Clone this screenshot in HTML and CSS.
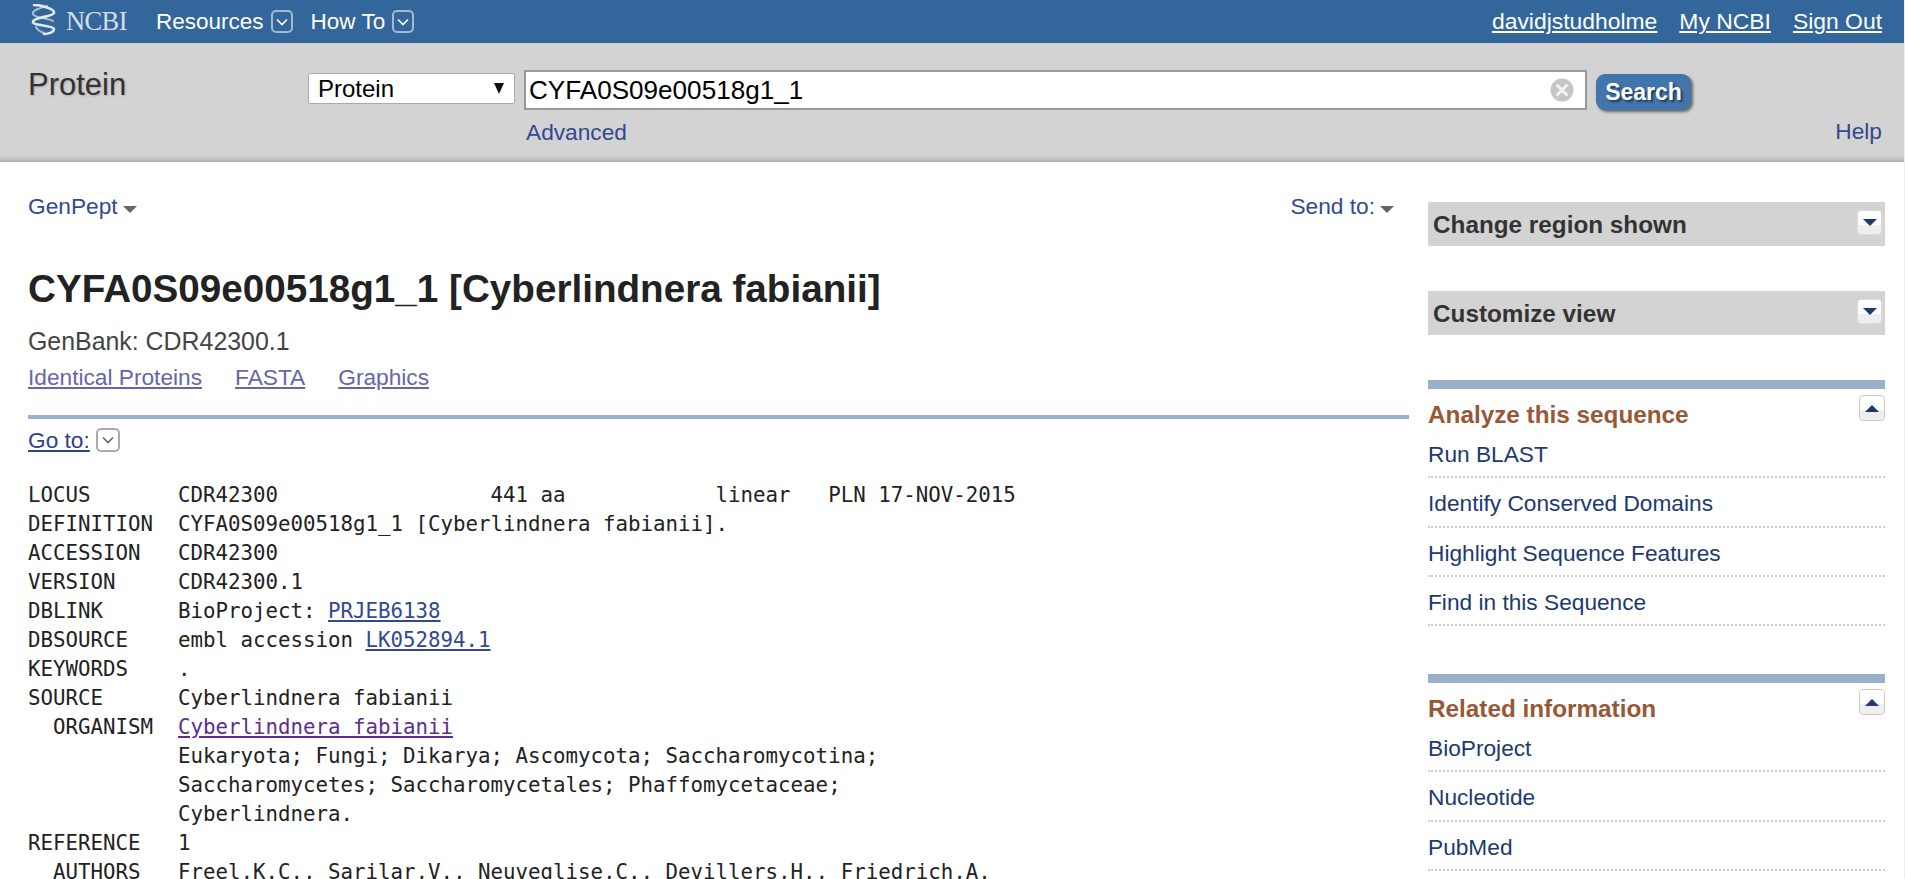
FILE: index.html
```html
<!DOCTYPE html>
<html lang="en">
<head>
<meta charset="utf-8">
<title>CYFA0S09e00518g1_1 [Cyberlindnera fabianii] - Protein - NCBI</title>
<link rel="stylesheet" href="styles.css">
</head>
<body>
<header class="nav">
  <a class="logo" href="#">
    <svg class="helix" viewBox="0 0 28 32" width="28" height="32" aria-hidden="true">
      <path class="strand-back" d="M18 2 C11 4 3 6 4 10 C5 14 19 14 24 17 M7 23 C9 27 12 28 15 29" />
      <path d="M5 1 C12 1 26 5 25 9 C24 13 4 13 4 18 C4 22 24 21 25 25 C25 28 20 30 15 30" />
    </svg>
    <span class="logo-text">NCBI</span>
  </a>
  <a class="nav-link" href="#">Resources</a>
  <span class="chev chev-nav"><svg viewBox="0 0 12 8" width="12" height="8"><path d="M1 1.5 L6 6.5 L11 1.5"/></svg></span>
  <a class="nav-link nav-howto" href="#">How To</a>
  <span class="chev chev-nav"><svg viewBox="0 0 12 8" width="12" height="8"><path d="M1 1.5 L6 6.5 L11 1.5"/></svg></span>
  <nav class="nav-user">
    <a href="#">davidjstudholme</a>
    <a href="#">My NCBI</a>
    <a href="#">Sign Out</a>
  </nav>
</header>

<section class="search">
  <div class="search-db">Protein</div>
  <div class="search-select">
    <select aria-label="Database"><option>Protein</option></select>
    <span class="select-arrow"></span>
  </div>
  <div class="search-mid">
    <div class="search-input">
      <input type="text" value="CYFA0S09e00518g1_1" aria-label="Search term">
      <span class="clear"><svg viewBox="0 0 24 24" width="24" height="24"><circle cx="12" cy="12" r="11.5"/><path d="M7.5 7.5 L16.5 16.5 M16.5 7.5 L7.5 16.5"/></svg></span>
    </div>
    <a class="advanced" href="#">Advanced</a>
  </div>
  <div class="search-side">
    <button class="search-btn" type="button">Search</button>
    <a class="help" href="#">Help</a>
  </div>
</section>

<div class="page">
  <main class="content">
    <div class="toolbar">
      <a class="tool" href="#">GenPept<span class="caret"></span></a>
      <a class="tool" href="#">Send to:<span class="caret"></span></a>
    </div>
    <h1>CYFA0S09e00518g1_1 [Cyberlindnera fabianii]</h1>
    <p class="accession">GenBank: CDR42300.1</p>
    <div class="links">
      <a href="#">Identical Proteins</a>
      <a href="#">FASTA</a>
      <a href="#">Graphics</a>
    </div>
    <div class="goto">
      <a href="#">Go to:</a>
      <span class="chev chev-goto"><svg viewBox="0 0 12 8" width="12" height="8"><path d="M1 1.5 L6 6.5 L11 1.5"/></svg></span>
    </div>
<pre class="record">LOCUS       CDR42300                 441 aa            linear   PLN 17-NOV-2015
DEFINITION  CYFA0S09e00518g1_1 [Cyberlindnera fabianii].
ACCESSION   CDR42300
VERSION     CDR42300.1
DBLINK      BioProject: <a href="#">PRJEB6138</a>
DBSOURCE    embl accession <a href="#">LK052894.1</a>
KEYWORDS    .
SOURCE      Cyberlindnera fabianii
  ORGANISM  <a class="visited" href="#">Cyberlindnera fabianii</a>
            Eukaryota; Fungi; Dikarya; Ascomycota; Saccharomycotina;
            Saccharomycetes; Saccharomycetales; Phaffomycetaceae;
            Cyberlindnera.
REFERENCE   1
  AUTHORS   Freel,K.C., Sarilar,V., Neuveglise,C., Devillers,H., Friedrich,A.</pre>
  </main>

  <aside class="side">
    <div class="side-box">
      <h2>Change region shown</h2>
      <span class="toggle"><span class="tri-down"></span></span>
    </div>
    <div class="side-box">
      <h2>Customize view</h2>
      <span class="toggle"><span class="tri-down"></span></span>
    </div>
    <section class="side-panel">
      <div class="panel-head">
        <h3>Analyze this sequence</h3>
        <span class="toggle toggle-up"><span class="tri-up"></span></span>
      </div>
      <ul>
        <li><a href="#">Run BLAST</a></li>
        <li><a href="#">Identify Conserved Domains</a></li>
        <li><a href="#">Highlight Sequence Features</a></li>
        <li><a href="#">Find in this Sequence</a></li>
      </ul>
    </section>
    <section class="side-panel">
      <div class="panel-head">
        <h3>Related information</h3>
        <span class="toggle toggle-up"><span class="tri-up"></span></span>
      </div>
      <ul>
        <li><a href="#">BioProject</a></li>
        <li><a href="#">Nucleotide</a></li>
        <li><a href="#">PubMed</a></li>
      </ul>
    </section>
  </aside>
</div>
</body>
</html>
```
FILE: styles.css
```css
* { box-sizing: border-box; }
html, body { height: 100%; overflow: hidden; }
body {
  margin: 0;
  background: #fff;
  color: #333;
  border-right: 1px solid #eee;
  font-family: "Liberation Sans", Arial, sans-serif;
  font-size: 22.7px;
}
a { text-decoration: none; }

/* top bar */
.nav {
  display: flex;
  align-items: center;
  height: 43px;
  background: #33669a;
  color: #fff;
  padding: 0 22px 0 29px;
}
.logo { display: flex; align-items: center; gap: 9px; width: 127px; }
.helix { flex: none; margin-top: -4px; fill: none; stroke: #e2e9f1; stroke-width: 2.6; stroke-linecap: round; }
.strand-back { stroke: #a9bdd2; stroke-width: 2; }
.logo-text {
  font-family: "Liberation Serif", serif;
  font-size: 26.5px;
  color: #d2dde8;
  letter-spacing: -0.6px;
}
.nav-link { color: #fff; font-size: 22.5px; }
.nav-howto { margin-left: 18px; }
.chev {
  display: inline-flex;
  align-items: center;
  justify-content: center;
  flex: none;
  width: 22px;
  height: 23px;
  border: 2px solid #a3b9cf;
  border-radius: 5px;
  margin-left: 7px;
}
.chev svg { fill: none; stroke: #fff; stroke-width: 1.6; }
.chev-goto { width: 24px; height: 24px; border-color: #aaa; margin-left: 6px; }
.chev-goto svg { stroke: #666; }
.nav-user { margin-left: auto; display: flex; gap: 22px; font-size: 22.9px; }
.nav-user a { color: #fff; text-decoration: underline; }

/* search band */
.search {
  display: flex;
  height: 119px;
  background: linear-gradient(#d3d3d3 calc(100% - 7px), #c4c4c4 calc(100% - 3px), #adadad 100%);
  padding: 26px 22px 0 28px;
}
.search-db {
  width: 280px;
  padding-top: 1px;
  font-size: 31px;
  line-height: 30px;
  color: #333;
  text-shadow: 1px 1px 2px #aaa;
}
.search-select { position: relative; width: 207px; height: 31px; margin-top: 4px; }
.search-select select {
  appearance: none;
  width: 100%;
  height: 100%;
  padding: 0 0 0 9px;
  border: 1px solid #aaa;
  border-radius: 2px;
  background: #fff;
  color: #000;
  font-family: inherit;
  font-size: 24px;
}
.select-arrow {
  position: absolute;
  top: 10px;
  right: 11px;
  border-left: 5.5px solid transparent;
  border-right: 5.5px solid transparent;
  border-top: 11px solid #111;
}
.search-mid { margin-left: 9px; width: 1063px; display: flex; flex-direction: column; padding-top: 1px; }
.search-input { position: relative; height: 40px; flex: none; }
.search-input input {
  width: 100%;
  height: 100%;
  padding: 0 44px 0 3px;
  border: 2px solid #999;
  border-radius: 0;
  background: #fff;
  color: #000;
  font-family: inherit;
  font-size: 26.1px;
  outline: none;
}
.clear { position: absolute; top: 8px; right: 13px; width: 24px; height: 24px; }
.clear circle { fill: #c6c6c6; }
.clear path { fill: none; stroke: #f2f2f2; stroke-width: 3; stroke-linecap: round; }
.advanced { margin-top: 7px; margin-left: 2px; line-height: 30px; color: #32498f; font-size: 22.7px; }
.search-side { flex: 1; display: flex; flex-direction: column; align-items: flex-start; padding-top: 1px; }
.search-btn {
  margin: 4px 0 0 9px;
  width: 95px;
  height: 36px;
  padding: 0;
  border: 0;
  border-radius: 9px;
  background: #4275ab;
  color: #fff;
  font-family: inherit;
  font-size: 23px;
  font-weight: bold;
  text-shadow: 2px 2px 2px #1d3c5e;
  box-shadow: 2px 2px 3px #666;
}
.help { align-self: flex-end; margin-top: 6px; line-height: 30px; color: #32498f; }

/* page */
.page {
  display: flex;
  height: 717px;
  padding-left: 28px;
}
.content { width: 1381px; flex: none; }
.toolbar {
  display: flex;
  justify-content: space-between;
  margin-top: 28px;
  padding-right: 15px;
  line-height: 32px;
}
.tool { color: #32498f; }
.caret {
  display: inline-block;
  margin-left: 5px;
  vertical-align: 1px;
  border-left: 7px solid transparent;
  border-right: 7px solid transparent;
  border-top: 7px solid #666;
}
h1 {
  margin: 45px 0 0;
  font-size: 38.65px;
  line-height: 44px;
  font-weight: bold;
  color: #222;
}
.accession { margin: 15px 0 0; font-size: 24.9px; line-height: 30px; color: #444; }
.links { display: flex; gap: 33px; margin-top: 6px; line-height: 30px; padding-bottom: 23px; border-bottom: 4px solid #97b0cd; }
.links a { color: #6666aa; text-decoration: underline; }
.goto { display: flex; align-items: center; height: 30px; margin-top: 6px; }
.goto a { color: #2c4488; text-decoration: underline; }
.record {
  margin: 26px 0 0;
  font-family: "DejaVu Sans Mono", "Liberation Mono", monospace;
  font-size: 20.78px;
  line-height: 29px;
  color: #222;
}
.record a { color: #32498f; text-decoration: underline; }
.record a.visited { color: #5f2d91; }

/* sidebar */
.side { width: 457px; margin-left: 19px; flex: none; padding-top: 40px; }
.side-box {
  display: flex;
  align-items: center;
  justify-content: space-between;
  height: 44px;
  margin-bottom: 45px;
  padding: 2px 3px 0 5px;
  background: #d3d3d3;
}
h2 { margin: 0; font-size: 24.3px; font-weight: bold; color: #333; }
.toggle {
  display: inline-flex;
  align-items: center;
  justify-content: center;
  flex: none;
  width: 25px;
  height: 25px;
  margin-top: -6px;
  border: 1px solid #ddd;
  border-radius: 4px;
  background: linear-gradient(#fff 60%, #eee 60%);
}
.tri-down { border-left: 7px solid transparent; border-right: 7px solid transparent; border-top: 7px solid #1c3a6e; }
.tri-up { border-left: 7px solid transparent; border-right: 7px solid transparent; border-bottom: 7px solid #1c3a6e; }
.side-panel { border-top: 9px solid #9ab0c8; margin-bottom: 48px; }
.side-box + .side-panel { margin-top: 1px; }
.panel-head { display: flex; justify-content: space-between; align-items: flex-start; height: 40px; padding-top: 6px; }
h3 { margin: 0; padding-top: 5px; font-size: 24.3px; line-height: 30px; font-weight: bold; color: #985735; }
.toggle-up { width: 26px; height: 26px; margin: 0; border-color: #ccc; }
ul { list-style: none; margin: 0; padding: 0; }
li { height: 49.3px; padding-top: 9px; border-bottom: 2px dotted #ccc; line-height: 32px; }
li a { color: #1c3a6e; }
```
